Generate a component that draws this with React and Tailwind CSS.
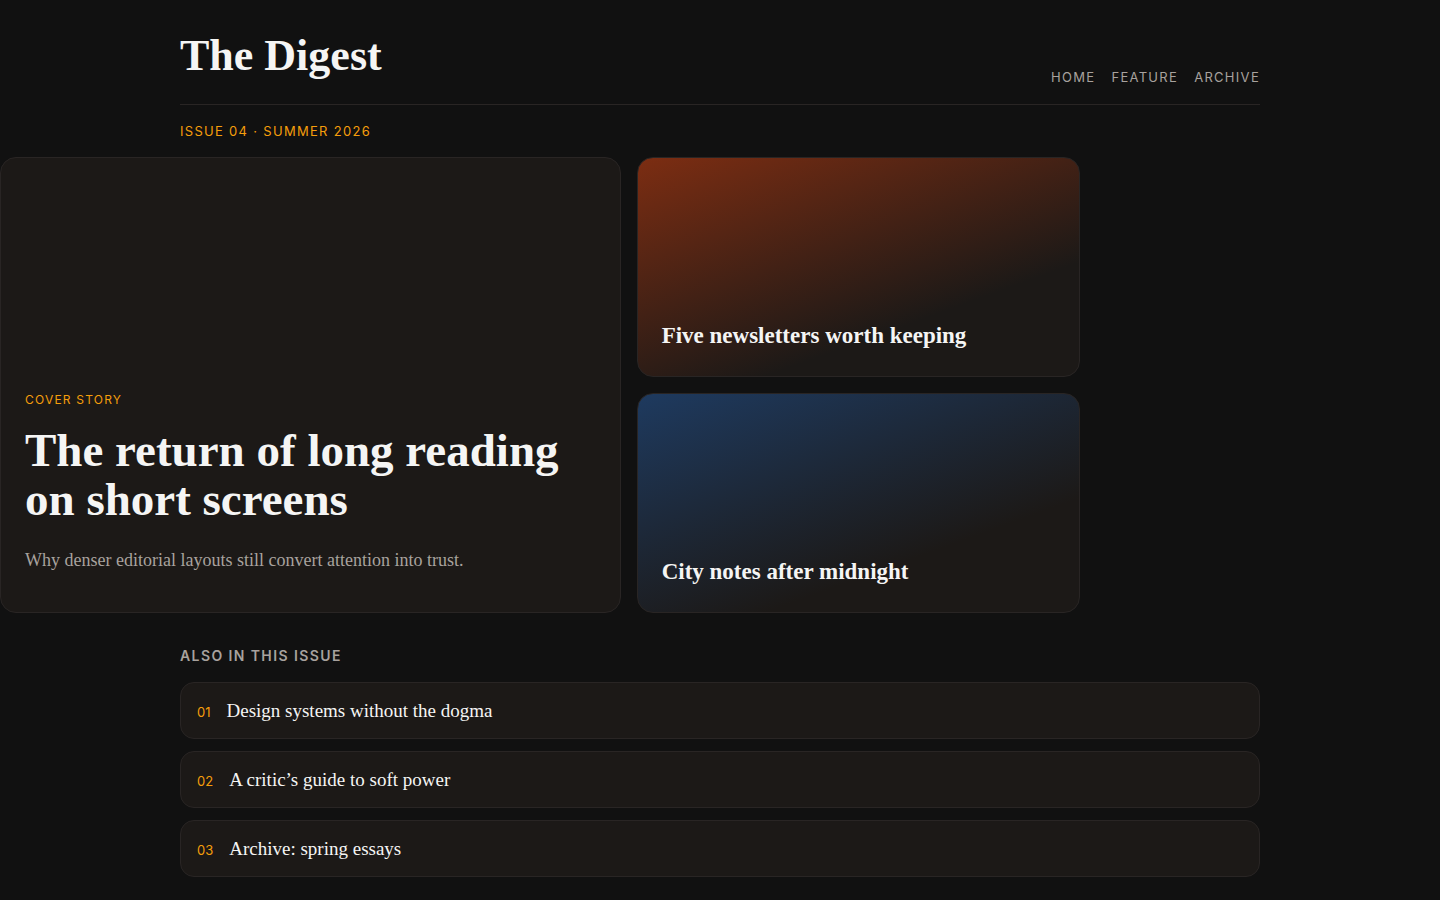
const links = ["Home", "Feature", "Archive"];

const stories = [
  { id: "01", title: "Design systems without the dogma" },
  { id: "02", title: "A critic’s guide to soft power" },
  { id: "03", title: "Archive: spring essays" },
];

function SideCard({ title, tone }) {
  return (
    <article className={`flex flex-col justify-end rounded-2xl border border-[#292524] p-6 ${tone}`}>
      <h3 className="text-[23px] leading-8 font-bold">{title}</h3>
    </article>
  );
}

export default function App() {
  return (
    <div className="min-h-screen bg-[#111111] pb-6 font-['Liberation_Serif',serif] text-[#f5f5f4]">
      <header className="mx-auto flex max-w-[1080px] items-end justify-between border-b border-[#292524] pt-8 pb-4">
        <h1 className="mb-2 text-[44px] leading-12 font-bold">The Digest</h1>
        <nav className="flex gap-4 font-[Inter,sans-serif] text-[13px] leading-[22px] tracking-widest text-[#a8a29e] uppercase">
          {links.map((l) => (
            <a key={l} href={`#${l.toLowerCase()}`}>{l}</a>
          ))}
        </nav>
      </header>

      <main>
        <p className="mx-auto max-w-[1080px] py-4 font-[Inter,sans-serif] text-[13px] leading-5 tracking-widest text-[#f59e0b] uppercase">
          Issue 04 · Summer 2026
        </p>

        <section className="grid max-w-[1080px] grid-cols-[1.4fr_1fr] grid-rows-[220px_220px] gap-4">
          <article className="row-span-2 flex flex-col justify-end rounded-2xl border border-[#292524] bg-[#1c1917] p-6">
            <p className="font-[Inter,sans-serif] text-[12px] leading-5 tracking-widest text-[#f59e0b] uppercase">Cover story</p>
            <h2 className="mt-4 mb-[22px] text-[47px] leading-[49px] font-bold">
              The return of long reading on short screens
            </h2>
            <p className="mb-[14px] text-[18px] leading-7 text-[#a8a29e]">
              Why denser editorial layouts still convert attention into trust.
            </p>
          </article>
          <SideCard
            title="Five newsletters worth keeping"
            tone="bg-[linear-gradient(160deg,#7c2d12,#1c1917_70%)]"
          />
          <SideCard
            title="City notes after midnight"
            tone="bg-[linear-gradient(160deg,#1e3a5f,#1c1917_70%)]"
          />
        </section>

        <section className="mx-auto mt-8 max-w-[1080px]">
          <h2 className="mb-4 font-[Inter,sans-serif] text-[14px] leading-[21px] font-semibold tracking-widest text-[#a8a29e] uppercase">
            Also in this issue
          </h2>
          <ol className="flex flex-col gap-3">
            {stories.map((s) => (
              <li key={s.id} className="flex items-baseline gap-4 rounded-[14px] border border-[#292524] bg-[#1c1917] px-4 py-[14px]">
                <span className="font-[Inter,sans-serif] text-[13px] leading-5 text-[#f59e0b]">{s.id}</span>
                <a href={`#story-${s.id}`} className="text-[19px] leading-[27px]">{s.title}</a>
              </li>
            ))}
          </ol>
        </section>
      </main>
    </div>
  );
}
